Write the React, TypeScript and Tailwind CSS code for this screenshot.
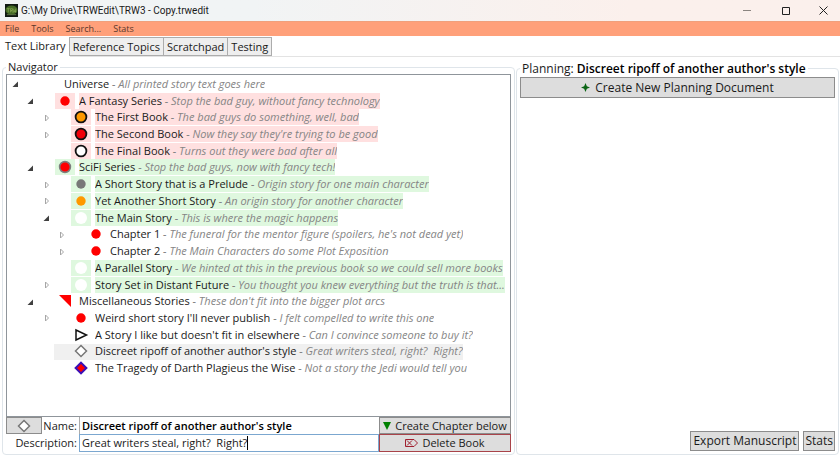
import { useState } from 'react';
import type { ReactNode } from 'react';

type Tint = 'pink' | 'green' | 'none';
type Shape =
  | 'none' | 'red' | 'orangeRing' | 'redRing' | 'whiteRing' | 'redGray' | 'gray' | 'orange'
  | 'white' | 'corner' | 'play' | 'diamond' | 'diamondFill';
type Row = {
  level: 0 | 1 | 2 | 3;
  arrow: 'open' | 'closed' | 'none';
  shape: Shape;
  tint: Tint;
  title: string;
  note: string;
  selected?: boolean;
};

const rows: Row[] = [
  { level: 0, arrow: 'open', shape: 'none', tint: 'none', title: 'Universe', note: 'All printed story text goes here' },
  { level: 1, arrow: 'open', shape: 'red', tint: 'pink', title: 'A Fantasy Series', note: 'Stop the bad guy, without fancy technology' },
  { level: 2, arrow: 'closed', shape: 'orangeRing', tint: 'pink', title: 'The First Book', note: 'The bad guys do something, well, bad' },
  { level: 2, arrow: 'closed', shape: 'redRing', tint: 'pink', title: 'The Second Book', note: "Now they say they're trying to be good" },
  { level: 2, arrow: 'none', shape: 'whiteRing', tint: 'pink', title: 'The Final Book', note: 'Turns out they were bad after all' },
  { level: 1, arrow: 'open', shape: 'redGray', tint: 'green', title: 'SciFi Series', note: 'Stop the bad guys, now with fancy tech!' },
  { level: 2, arrow: 'closed', shape: 'gray', tint: 'green', title: 'A Short Story that is a Prelude', note: 'Origin story for one main character' },
  { level: 2, arrow: 'closed', shape: 'orange', tint: 'green', title: 'Yet Another Short Story', note: 'An origin story for another character' },
  { level: 2, arrow: 'open', shape: 'white', tint: 'green', title: 'The Main Story', note: 'This is where the magic happens' },
  { level: 3, arrow: 'closed', shape: 'red', tint: 'none', title: 'Chapter 1', note: "The funeral for the mentor figure (spoilers, he's not dead yet)" },
  { level: 3, arrow: 'closed', shape: 'red', tint: 'none', title: 'Chapter 2', note: 'The Main Characters do some Plot Exposition' },
  { level: 2, arrow: 'none', shape: 'white', tint: 'green', title: 'A Parallel Story', note: 'We hinted at this in the previous book so we could sell more books' },
  { level: 2, arrow: 'closed', shape: 'white', tint: 'green', title: 'Story Set in Distant Future', note: 'You thought you knew everything but the truth is that...' },
  { level: 1, arrow: 'open', shape: 'corner', tint: 'none', title: 'Miscellaneous Stories', note: "These don't fit into the bigger plot arcs" },
  { level: 2, arrow: 'closed', shape: 'red', tint: 'none', title: "Weird short story I'll never publish", note: 'I felt compelled to write this one' },
  { level: 2, arrow: 'none', shape: 'play', tint: 'none', title: "A Story I like but doesn't fit in elsewhere", note: 'Can I convince someone to buy it?' },
  { level: 2, arrow: 'none', shape: 'diamond', tint: 'none', title: "Discreet ripoff of another author's style", note: 'Great writers steal, right?  Right?', selected: true },
  { level: 2, arrow: 'none', shape: 'diamondFill', tint: 'none', title: 'The Tragedy of Darth Plagieus the Wise', note: 'Not a story the Jedi would tell you' },
];

const indent = { 0: 'pl-0', 1: 'pl-[15px]', 2: 'pl-[31px]', 3: 'pl-[46px]' };
const tints = { pink: 'bg-[#ffe0e0]', green: 'bg-[#dff8df]', none: '' };

const shapes: Record<Shape, ReactNode> = {
  none: null,
  red: <circle cx="8" cy="8" r="4.7" fill="#f00" />,
  orangeRing: <circle cx="8" cy="8" r="5.4" fill="#ff9900" stroke="#111" strokeWidth="1.8" />,
  redRing: <circle cx="8" cy="8" r="5.4" fill="#f00008" stroke="#111" strokeWidth="1.8" />,
  whiteRing: <circle cx="8" cy="8" r="5.4" fill="#fff" stroke="#111" strokeWidth="1.8" />,
  redGray: <circle cx="8" cy="8" r="5.4" fill="#f00" stroke="#7d7d7d" strokeWidth="1.6" />,
  gray: <circle cx="8" cy="8" r="4.7" fill="#787878" />,
  orange: <circle cx="8" cy="8" r="4.7" fill="#ff9900" />,
  white: <circle cx="8" cy="8" r="6" fill="#fff" />,
  corner: <path d="M2 2h12v12z" fill="#f00" />,
  play: <path d="M3 3v10l10.500-5z" fill="#fff" stroke="#111" strokeWidth="1.500" />,
  diamond: <path d="M8 2.500L13.500 8L8 13.500L2.500 8z" fill="#fff" stroke="#777" strokeWidth="1.500" />,
  diamondFill: <path d="M8 2.600L13.400 8L8 13.400L2.600 8z" fill="#f00" stroke="#3a10b8" strokeWidth="2" />,
};

function ShapeIcon({ shape }: { shape: Shape }) {
  return <svg viewBox="0 0 16 16" className="size-4 shrink-0" aria-hidden="true">{shapes[shape]}</svg>;
}

function Arrow({ kind }: { kind: Row['arrow'] }) {
  if (kind === 'none') return <span className="w-4 shrink-0" />;
  return (
    <button type="button" aria-label={kind === 'open' ? 'Collapse' : 'Expand'} className="w-4 shrink-0">
      <svg viewBox="0 0 16 16" className="size-4" aria-hidden="true">
        {kind === 'open'
          ? <path d="M11 5.500V11H5.500z" fill="#404040" />
          : <path d="M7.500 5v6l3-3z" fill="#fff" stroke="#a6a6a6" />}
      </svg>
    </button>
  );
}

function TreeRow({ row }: { row: Row }) {
  return (
    <li className={`flex min-w-0 items-center pr-0.5 ${indent[row.level]}`}>
      <Arrow kind={row.arrow} />
      <div className={`flex h-full min-w-0 items-center pl-[17px] ${row.selected ? 'bg-[#f0f0f0]' : ''}`}>
        <span className={`mb-px flex h-4 w-5 shrink-0 items-center justify-center ${tints[row.tint]}`}>
          <ShapeIcon shape={row.shape} />
        </span>
        <span className={`mb-px ml-1 h-4 truncate whitespace-pre leading-4 ${tints[row.tint]}`}>
          {row.title}
          <i className="text-[#858585]"> - {row.note}</i>
        </span>
      </div>
    </li>
  );
}

const button = 'flex items-center justify-center border border-[#8c8c8c] bg-[#dddddd]';
const tabs = ['Reference Topics', 'Scratchpad', 'Testing'];

export default function App() {
  const [name, setName] = useState("Discreet ripoff of another author's style");
  const [description, setDescription] = useState('Great writers steal, right?  Right?');
  return (
    <div className="flex min-h-screen flex-col bg-white font-['Open_Sans','Noto_Sans',sans-serif] text-[11px] leading-4 text-[#1a1a1a]">
      <header className="flex h-[21px] items-center bg-linear-to-r from-[#f1f4f5] from-30% to-[#fbf0ec] to-75%">
        <svg viewBox="0 0 14 14" className="ml-[5px] size-[13px]" aria-hidden="true">
          <path d="M0 0h14v14H0z" fill="#111a12" />
          <ellipse cx="7" cy="6.500" rx="6.500" ry="5" fill="#456b25" />
          <path d="M2 5h3M3.500 5v4M6 9V5h2v2H6.500L8.500 9M9.500 5v4l1-2 1 2V5" fill="none" stroke="#93b35a" strokeWidth=".7" />
          <path d="M2 11.500h10" stroke="#637b4a" />
        </svg>
        <h1 className="ml-[3px] flex-1 font-['Roboto','Open_Sans',sans-serif] text-[10px] leading-4">G:\My Drive\TRWEdit\TRW3 - Copy.trwedit</h1>
        <div className="mr-3 flex gap-[29px] text-[#222]">
          <button type="button" aria-label="Minimize"><svg viewBox="0 0 9 9" className="size-[9px]"><path d="M0 4.500h8" stroke="#8b8580" /></svg></button>
          <button type="button" aria-label="Maximize"><svg viewBox="0 0 9 9" className="size-[9px]"><path d="M1.500 1.500h7v7h-7z" fill="none" stroke="currentColor" /></svg></button>
          <button type="button" aria-label="Close"><svg viewBox="0 0 9 9" className="size-[9px]"><path d="M.5.5l8 8M8.500.5l-8 8" stroke="currentColor" /></svg></button>
        </div>
      </header>
      <nav aria-label="Menu" className="flex h-[15px] items-center gap-3 border-t border-[#f0a07c] bg-[#ffa07a] pl-[5px] text-[9px] text-[#5a382b]">
        <button type="button">File</button>
        <button type="button">Tools</button>
        <button type="button">Search...</button>
        <button type="button">Stats</button>
      </nav>
      <div role="tablist" className="mt-px flex h-5 items-end border-b border-[#e3e3e3]">
        <button type="button" role="tab" aria-selected="true" className="-mb-px h-5 bg-white pr-1 pl-[5px] pb-0.5">Text Library</button>
        {tabs.map((tab) => (
          <button key={tab} type="button" role="tab" aria-selected="false" className="-ml-px h-[19px] border border-[#acacac] bg-[#eeeeee] px-[3px]">{tab}</button>
        ))}
      </div>

      <main className="flex flex-1 pt-[3px] pr-px pb-0.5 pl-0.5">
        <fieldset className="flex w-[513px] min-w-0 shrink-0 flex-col rounded-sm border border-[#dfe5ea] px-[3px] pb-0.5">
          <legend className="px-0.5 leading-[14px]">Navigator</legend>
          <ul className="flex-1 border border-[#8f959b] pt-px" aria-label="Story tree">
            <li>
              <ul className="grid h-[301px] grid-rows-[repeat(18,minmax(0,1fr))]">
                {rows.map((row) => <TreeRow key={row.title} row={row} />)}
              </ul>
            </li>
          </ul>
          <div className="grid grid-cols-[73px_1fr_132px] grid-rows-[17px_18px]">
            <div className="flex items-center justify-between pr-0.5">
              <button type="button" aria-label="Marker" className={`${button} h-[17px] w-[36px]`}><ShapeIcon shape="diamond" /></button>
              <label htmlFor="name">Name:</label>
            </div>
            <input id="name" value={name} onChange={(e) => setName(e.target.value)} className="min-w-0 border-l border-[#acacac] px-0.5 font-semibold text-black outline-none" />
            <button type="button" className={`${button} gap-1`}>
              <svg viewBox="0 0 8 8" className="size-2"><path d="M0 0h8L4 8z" fill="#008000" /></svg>
              Create Chapter below
            </button>
            <label htmlFor="description" className="pr-0.5 text-right leading-[18px]">Description:</label>
            <div className="relative flex">
              <input id="description" value={description} onChange={(e) => setDescription(e.target.value)} className="min-w-0 flex-1 border border-[#7ba7d0] px-0.5 outline-none" />
              <span className="pointer-events-none absolute top-0.5 left-[3px] h-3.5 border-r border-black whitespace-pre text-transparent" aria-hidden="true">{description}</span>
            </div>
            <button type="button" className="flex items-center justify-center gap-1 border border-[#a8434a] bg-[#dddddd]">
              <svg viewBox="0 0 13 8" className="h-2 w-[13px]" fill="none" stroke="#a02030"><path d="M.5.5H9L12.500 4L9 7.500H.5zM2 1.500l5 5M7 1.500l-5 5" /></svg>
              Delete Book
            </button>
          </div>
        </fieldset>
        <fieldset className="ml-px flex min-w-0 flex-1 flex-col rounded-sm border border-[#dfe5ea] px-[3px] pb-[3px]">
          <legend className="px-0.5 text-[12px] leading-[17px]">Planning: <b className="font-semibold text-black">Discreet ripoff of another author's style</b></legend>
          <button type="button" className={`${button} h-[21px] gap-[5px] text-[12px]`}>
            <svg viewBox="0 0 10 10" className="size-[9px]"><path d="M5 0L6.500 3.500L10 5L6.500 6.500L5 10L3.500 6.500L0 5L3.500 3.500z" fill="#0a6414" /></svg>
            Create New Planning Document
          </button>
          <div className="mt-auto flex justify-end gap-1">
            <button type="button" className={`${button} h-5 px-0.5 text-[12px]`}>Export Manuscript</button>
            <button type="button" className={`${button} h-5 px-px text-[12px]`}>Stats</button>
          </div>
        </fieldset>
      </main>
    </div>
  );
}
